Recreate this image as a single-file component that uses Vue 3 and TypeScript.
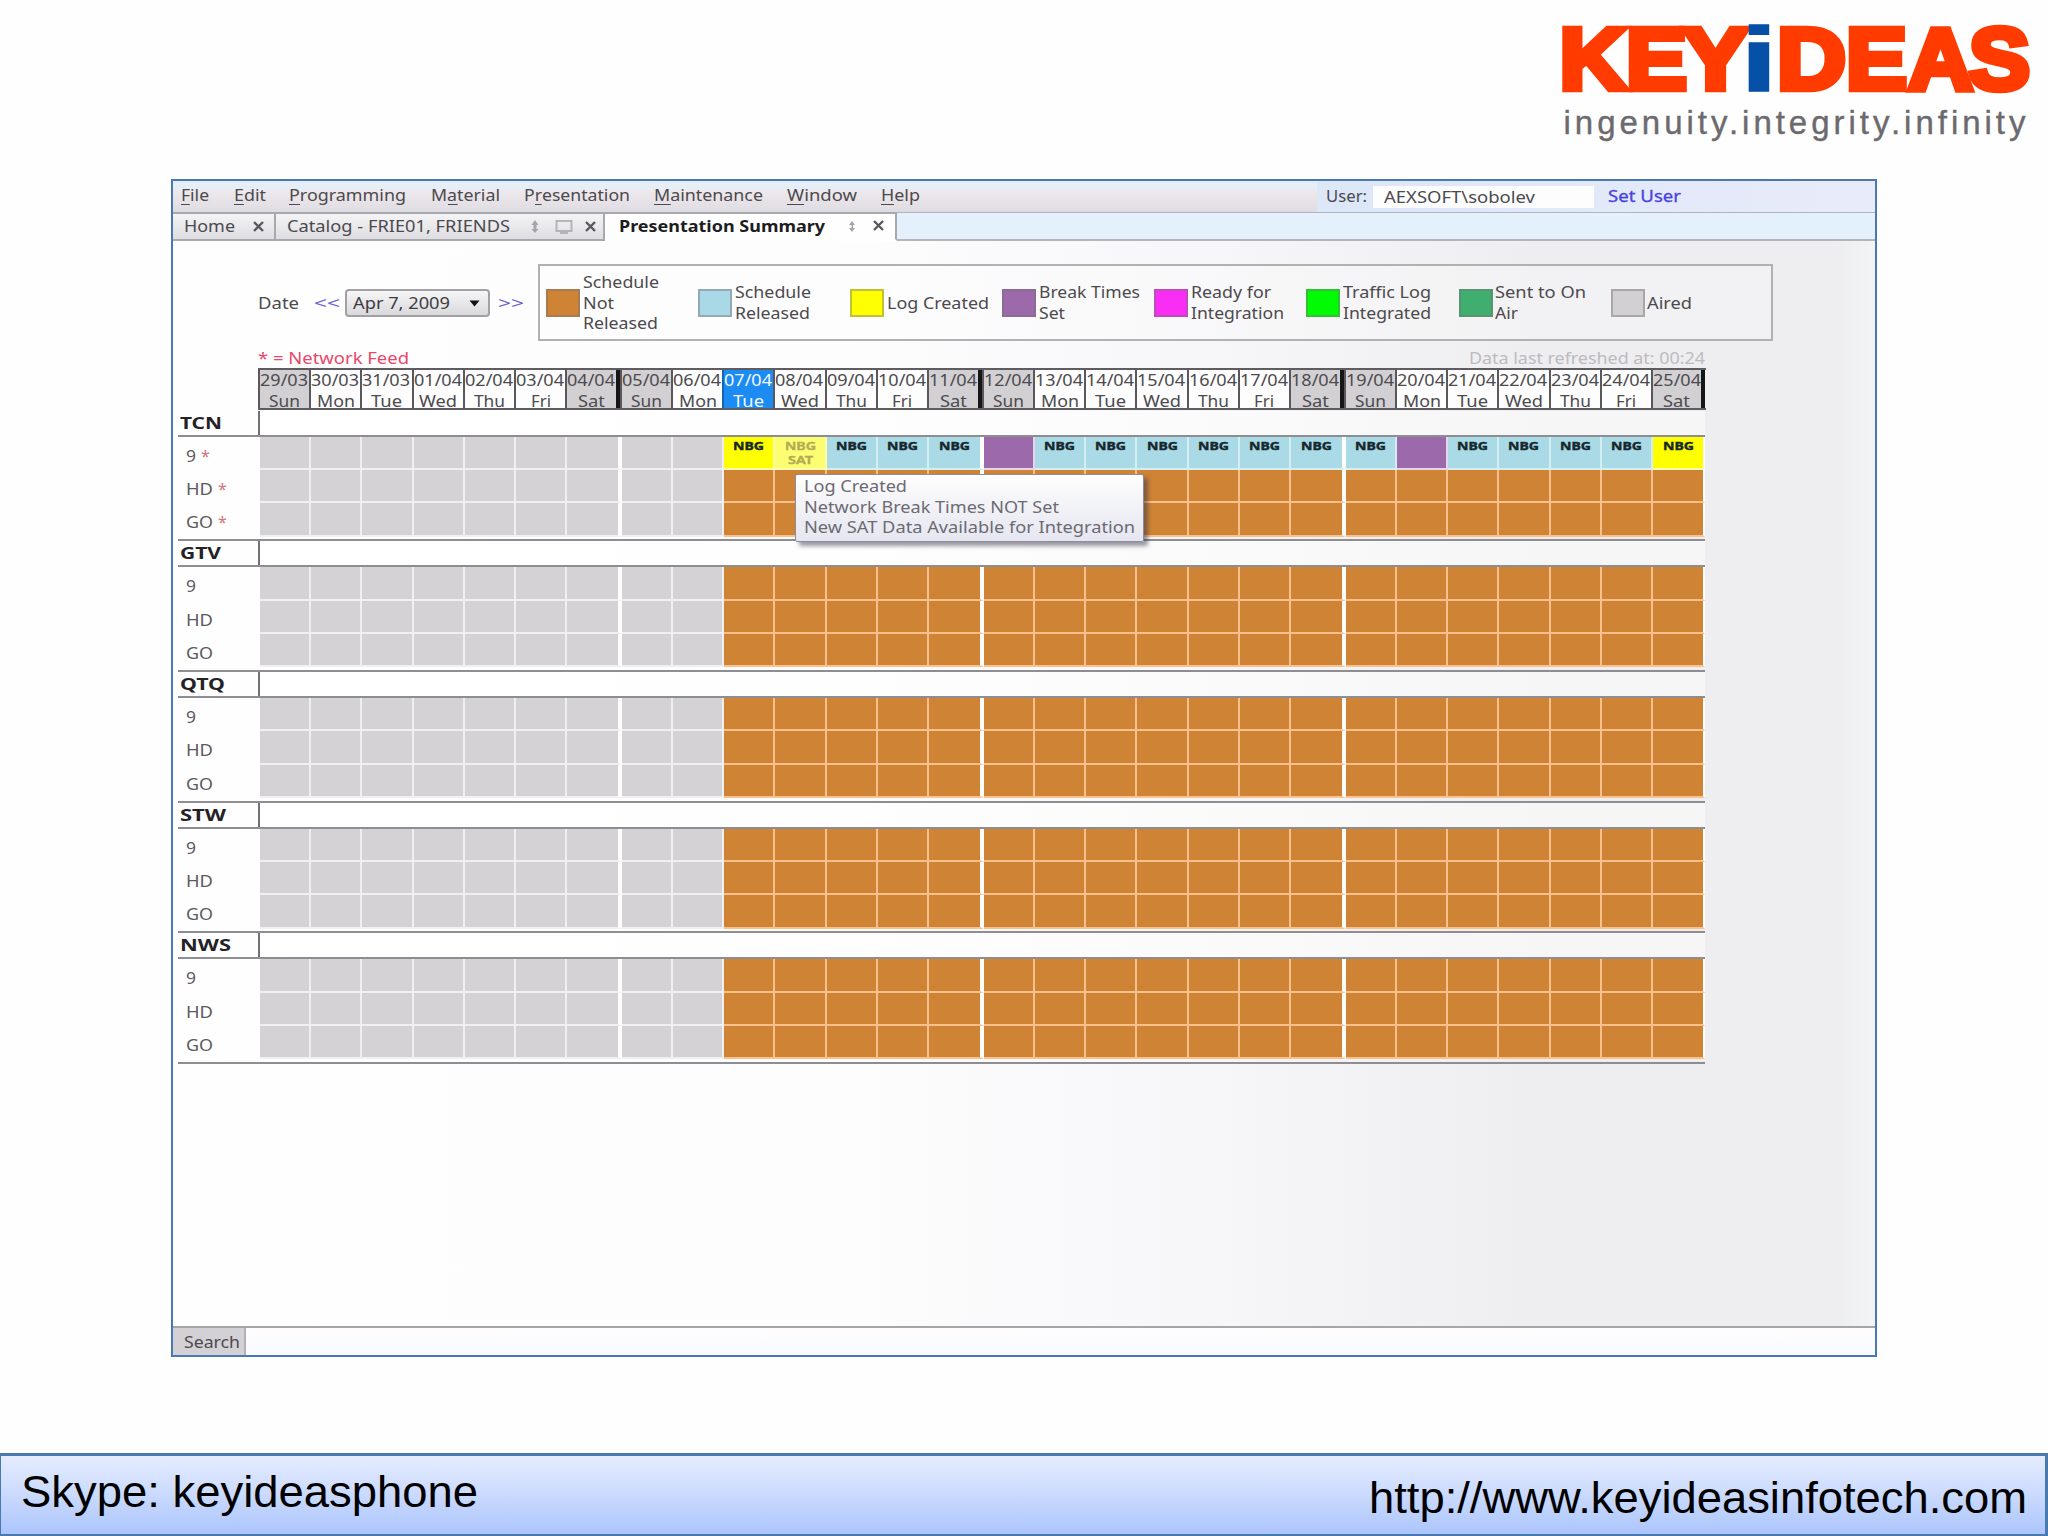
<script setup lang="ts">
import type { Directive } from 'vue'

/* Stretches a label horizontally so that it occupies the given width. */
const vFit: Directive<HTMLElement, number> = {
  mounted(el, { value }) {
    const natural = el.getBoundingClientRect().width
    if (natural > 0) {
      el.style.transform = `scaleX(${value / natural})`
      el.style.marginRight = `${value - natural}px`
    }
  },
}

interface MenuItem { pre: string; key: string; post: string; width: number; advance: number }
const menu: MenuItem[] = [
  { pre: '', key: 'F', post: 'ile', width: 28, advance: 53 },
  { pre: '', key: 'E', post: 'dit', width: 32, advance: 55 },
  { pre: '', key: 'P', post: 'rogramming', width: 117, advance: 142 },
  { pre: 'M', key: 'a', post: 'terial', width: 69, advance: 93 },
  { pre: 'P', key: 'r', post: 'esentation', width: 106, advance: 130 },
  { pre: '', key: 'M', post: 'aintenance', width: 109, advance: 133 },
  { pre: '', key: 'W', post: 'indow', width: 70, advance: 94 },
  { pre: '', key: 'H', post: 'elp', width: 39, advance: 60 },
]

interface Line { text: string; width: number }
const legend: { color: string; lines: Line[] }[] = [
  { color: '#cf8435', lines: [{ text: 'Schedule', width: 76 }, { text: 'Not', width: 31 }, { text: 'Released', width: 75 }] },
  { color: '#a9d8e6', lines: [{ text: 'Schedule', width: 76 }, { text: 'Released', width: 75 }] },
  { color: '#ffff00', lines: [{ text: 'Log Created', width: 102 }] },
  { color: '#9c69ab', lines: [{ text: 'Break Times', width: 101 }, { text: 'Set', width: 26 }] },
  { color: '#f92df4', lines: [{ text: 'Ready for', width: 80 }, { text: 'Integration', width: 93 }] },
  { color: '#00fb04', lines: [{ text: 'Traffic Log', width: 88 }, { text: 'Integrated', width: 88 }] },
  { color: '#3fae6e', lines: [{ text: 'Sent to On', width: 91 }, { text: 'Air', width: 23 }] },
  { color: '#d2d0d3', lines: [{ text: 'Aired', width: 45 }] },
]

const names = ['Sun', 'Mon', 'Tue', 'Wed', 'Thu', 'Fri', 'Sat']
const nameWidths = [31, 38, 31, 38, 31, 20, 27]
const TODAY = 9
const days = Array.from({ length: 28 }, (_, i) => {
  const d = new Date(Date.UTC(2009, 2, 29 + i))
  const two = (n: number) => String(n).padStart(2, '0')
  return {
    index: i,
    date: `${two(d.getUTCDate())}/${two(d.getUTCMonth() + 1)}`,
    name: names[i % 7],
    width: nameWidths[i % 7],
    weekend: i % 7 === 0 || i % 7 === 6,
    endOfWeek: i % 7 === 6,
  }
})

const groups = ['TCN', 'GTV', 'QTQ', 'STW', 'NWS']
const groupWidths = [42, 41, 45, 46, 51]
const rows = [{ name: '9', width: 10 }, { name: 'HD', width: 27 }, { name: 'GO', width: 27 }]

function status(group: number, row: number, day: number): string {
  if (day < TODAY) return 'aired'
  if (group > 0 || row > 0) return 'pending'
  if (day === TODAY || day === 27) return 'log'
  if (day === 10) return 'log-sat'
  if (day === 14 || day === 22) return 'breaks'
  return 'released'
}
const marked = (s: string) => s === 'log' || s === 'log-sat' || s === 'released'

const tip: Line[] = [
  { text: 'Log Created', width: 103 },
  { text: 'Network Break Times NOT Set', width: 255 },
  { text: 'New SAT Data Available for Integration', width: 331 },
]
</script>

<template>
  <div class="slide">
    <header class="brand">
      <svg width="508" height="160" viewBox="0 0 508 160" aria-label="KEYiDEAS">
        <g class="mark">
          <text y="88.5" x="19.500" textLength="67" lengthAdjust="spacingAndGlyphs">K</text>
          <text y="88.5" x="86" textLength="61" lengthAdjust="spacingAndGlyphs">E</text>
          <text y="88.5" x="143" textLength="65" lengthAdjust="spacingAndGlyphs">Y</text>
          <text y="88.5" x="237" textLength="69" lengthAdjust="spacingAndGlyphs">D</text>
          <text y="88.5" x="306" textLength="61" lengthAdjust="spacingAndGlyphs">E</text>
          <text y="88.5" x="368" textLength="65" lengthAdjust="spacingAndGlyphs">A</text>
          <text y="88.5" x="429" textLength="61" lengthAdjust="spacingAndGlyphs">S</text>
        </g>
        <text class="mark-i" y="91" x="200.500" textLength="37" lengthAdjust="spacingAndGlyphs">i</text>
        <text class="tagline" y="134" x="23.500" textLength="462">ingenuity.integrity.infinity</text>
      </svg>
    </header>

    <main class="window">
      <div class="menubar">
        <nav class="menu">
          <span v-for="m in menu" :key="m.key + m.post" class="menu-item" :style="{ width: m.advance + 'px' }">
            <span v-fit="m.width" class="t">{{ m.pre }}<u>{{ m.key }}</u>{{ m.post }}</span>
          </span>
        </nav>
        <div class="user">
          <span v-fit="41" class="t">User:</span>
          <span class="user-field"><span v-fit="151" class="t">AEXSOFT\sobolev</span></span>
          <span v-fit="73" class="t link">Set User</span>
        </div>
      </div>

      <div class="tabs">
        <div class="tab home">
          <span v-fit="51" class="t">Home</span>
          <svg class="close" width="13" height="11" viewBox="0 0 13 11"><path d="M2 1l9 9M11 1l-9 9" /></svg>
        </div>
        <div class="tab catalog">
          <span v-fit="223" class="t">Catalog - FRIE01, FRIENDS</span>
          <svg class="pin" width="8" height="13" viewBox="0 0 8 13"><path d="M4 0L0.500 5h2v4h-2L4 13l3.500-4h-2V5h2z" /></svg>
          <svg class="disk" width="18" height="14" viewBox="0 0 18 14"><path d="M1.500 1h15v10h-15zM5 13h8" /></svg>
          <svg class="close" width="13" height="11" viewBox="0 0 13 11"><path d="M2 1l9 9M11 1l-9 9" /></svg>
        </div>
        <div class="tab active">
          <span v-fit="206" class="t">Presentation Summary</span>
          <svg class="pin" width="8" height="13" viewBox="0 0 8 13"><path d="M4 1L1 5h2.500v3H1l3 4 3-4H5V5h2z" /></svg>
          <svg class="close" width="13" height="11" viewBox="0 0 13 11"><path d="M2 1l9 9M11 1l-9 9" /></svg>
        </div>
        <div class="tab-rest"></div>
      </div>

      <section class="content">
        <div class="controls">
          <div class="date">
            <span v-fit="41" class="t">Date</span>
            <span v-fit="26" class="t step prev">&lt;&lt;</span>
            <span class="select">
              <span v-fit="97" class="t">Apr 7, 2009</span>
              <svg width="11" height="7" viewBox="0 0 11 7"><path d="M0.500 0.500h10L5.500 6.500z" fill="#111" /></svg>
            </span>
            <span v-fit="26" class="t step next">&gt;&gt;</span>
          </div>
          <div class="legend">
            <div v-for="(l, i) in legend" :key="i" class="legend-item">
              <i class="swatch" :style="{ background: l.color }"></i>
              <span class="legend-text">
                <span v-for="line in l.lines" :key="line.text" class="line"><span v-fit="line.width" class="t">{{ line.text }}</span></span>
              </span>
            </div>
          </div>
        </div>

        <div class="notes">
          <span v-fit="151" class="t feed">* = Network Feed</span>
          <span class="refreshed"><span v-fit="236" class="t">Data last refreshed at: 00:24</span></span>
        </div>

        <div class="grid">
          <div class="days">
            <div v-for="d in days" :key="d.index" class="day"
                 :class="{ weekend: d.weekend, end: d.endOfWeek, today: d.index === TODAY }">
              <span class="line"><span v-fit="48" class="t">{{ d.date }}</span></span>
              <span class="line mid"><span v-fit="d.width" class="t">{{ d.name }}</span></span>
            </div>
          </div>

          <div v-for="(g, gi) in groups" :key="g" class="group" :class="{ first: gi === 0 }">
            <div class="group-head">
              <div class="group-name"><span v-fit="groupWidths[gi]" class="t">{{ g }}</span></div>
              <div class="group-band"></div>
            </div>
            <div v-for="(r, ri) in rows" :key="r.name" class="row">
              <div class="row-name">
                <span v-fit="r.width" class="t">{{ r.name }}</span>
                <span v-if="gi === 0" class="t star">*</span>
              </div>
              <div v-for="d in days" :key="d.index" class="cell" :class="[status(gi, ri, d.index), { end: d.endOfWeek }]">
                <template v-if="marked(status(gi, ri, d.index))">
                  <b><span v-fit="31" class="t">NBG</span></b>
                  <b v-if="status(gi, ri, d.index) === 'log-sat'"><span v-fit="25" class="t sat">SAT</span></b>
                </template>
              </div>
            </div>
          </div>
        </div>

        <div class="tooltip">
          <span v-for="l in tip" :key="l.text" class="line"><span v-fit="l.width" class="t">{{ l.text }}</span></span>
        </div>
      </section>

      <div class="statusbar">
        <div class="search"><span v-fit="56" class="t">Search</span></div>
      </div>
    </main>

    <footer class="contact">
      <span v-fit="457" class="t skype">Skype: keyideasphone</span>
      <span class="site"><span v-fit="658" class="t">http://www.keyideasinfotech.com</span></span>
    </footer>
  </div>
</template>

<style>
body { background: #fefefe; }
</style>

<style scoped>
* { box-sizing: border-box; }
.slide {
  width: 2048px; height: 1536px; overflow: hidden; position: relative;
  display: flex; flex-direction: column; background: #fefefe;
  font-family: "Noto Sans", "Open Sans", sans-serif; font-size: 16px; color: #4c4a4e;
}
.t { display: inline-block; white-space: pre; transform-origin: 0 50%; flex: none; }
.line { display: block; white-space: nowrap; }

.brand { height: 179px; display: flex; justify-content: flex-end; flex: none; }
.mark text, .mark-i { font: bold 88px "Liberation Sans", Arial, sans-serif; }
.mark text { fill: #ff3b00; stroke: #ff3b00; stroke-width: 6.500px; }
.mark-i { font-size: 90px; fill: #0750a8; stroke: #0750a8; stroke-width: 1.500px; }
.tagline { font: 33px "Liberation Sans", Arial, sans-serif; fill: #6c6a6e; stroke: #6c6a6e; stroke-width: .4px; }

.window {
  width: 1706px; height: 1178px; margin-left: 171px; flex: none;
  border: 2px solid #4a79b2; display: flex; flex-direction: column;
}
.menubar {
  height: 31px; flex: none; display: flex; line-height: 28px;
  background: linear-gradient(90deg, #dfe7f3, #dce7f8 70%, #e8ebfa);
}
.menu {
  width: 1144px; padding-left: 8px; display: flex;
  background: linear-gradient(#e3effc 0, #e9edf4 24%, #ebe6e9 45%, #e2dfe5 85%, #dcdce2);
}
.menu-item { flex: none; }
u { text-decoration: none; box-shadow: inset 0 -1px #4c4a4e; display: inline-block; line-height: 19px; }
.user { display: flex; padding: 0 0 0 9px; line-height: 31px; }
.user-field { width: 221px; height: 22px; margin: 5px 14px 0 6px; padding-left: 11px; line-height: 22px; background: #fdfdfe; }
.link { color: #4a43e0; -webkit-text-stroke: .3px #4a43e0; }

.tabs { height: 29px; flex: none; display: flex; background: #e4f0fc; line-height: 27px; }
.tab { display: flex; align-items: center; border: 2px solid #a9a9ad; border-left: 0; background: linear-gradient(#f4f4f6, #dedde1); }
.home { width: 103px; padding-left: 11px; }
.home .close { margin-left: 17px; }
.catalog { width: 329px; padding-left: 11px; }
.catalog .pin { margin-left: 21px; }
.catalog .disk { margin-left: 16px; }
.catalog .close { margin-left: 11px; }
.active { width: 292px; padding-left: 14px; background: #fefefe; border-bottom-color: #fefefe; font-weight: bold; color: #1d1c1f; line-height: 24px; }
.active .t { margin-top: -2px; }
.active .pin { margin-left: 23px; }
.active .close { margin-left: 16px; margin-top: -2px; }
.tab-rest { flex: 1; border: solid #b3b5ba; border-width: 1px 0 2px; }
.close { fill: none; stroke: #5a585c; stroke-width: 2.4; }
.pin { fill: #a3a5ab; }
.disk { fill: none; stroke: #b4b4ba; stroke-width: 2; }

.content {
  height: 1085px; flex: none; position: relative; display: flex; flex-direction: column;
  background: linear-gradient(90deg, #fefefe 0, #fefdfe 38%, #f7f6f8 60%, #eeedef 80%, #eeedef 97.500%, #f2f5f5);
}
.controls { display: flex; padding: 23px 0 0 85px; height: 101px; flex: none; }
.date { width: 280px; height: 77px; padding-top: 1px; display: flex; align-items: center; flex: none; }
.step { color: #6a62d8; }
.prev { margin-left: 15px; }
.select {
  width: 145px; height: 28px; margin: 0 8px 0 5px; padding: 0 8px 0 6px;
  display: flex; align-items: center; justify-content: space-between;
  border: 2px solid #a2a0a4; border-radius: 4px; background: linear-gradient(#f6f6f7, #d9d8db); color: #3d3b3f;
}
.legend { width: 1235px; height: 77px; border: 2px solid #b2b0b3; display: flex; padding-left: 6px; background: rgba(255,255,255,.25); }
.legend-item { width: 152.100px; display: flex; align-items: center; flex: none; }
.swatch { width: 34px; height: 28px; border: 2px solid rgba(120,115,120,.45); flex: none; }
.legend-text { margin-left: 2.500px; line-height: 20.600px; padding-top: 1px; }

.notes { display: flex; height: 23px; width: 1532px; padding: 4px 0 0 85px; line-height: 24px; overflow: hidden; flex: none; }
.feed { color: #e8486a; }
.refreshed { margin-left: auto; color: #bdbbbf; }

.grid { width: 1533px; padding-left: 5px; margin-top: 3px; flex: none; }
.days { display: flex; height: 42px; width: 1448px; margin-left: 80px; border: solid #5e5c60; border-width: 2px 0; }
.day { width: 51.200px; flex: none; border-left: 2px solid #5a585c; overflow: hidden; line-height: 20.500px; font-size: 17px; background: #fdfdfd; height: 38px; color: #4c4a4e; }
.day .line { height: 20.500px; }
.day .mid { text-align: center; }
.day.end { width: 54.800px; border-right: 4px solid #161616; }
.day.end:last-child { width: 53.800px; }
.weekend { background: #d2d0d3; }
.today { background: #1c8cf2; color: #f2f8ff; border-color: #1565b5; }

.group { border-top: 2px solid #8e8d91; height: 130.700px; width: 1527px; }
.group:last-child { border-bottom: 2px solid #8e8d91; height: 132.700px; }
.group.first { border-top-color: transparent; margin-top: -1.500px; }
.group-head { display: flex; height: 26px; border-bottom: 2px solid #8e8d91; }
.group-name { width: 82px; padding-left: 2px; border-right: 2px solid #727074; font-weight: bold; color: #242226; line-height: 25px; }
.group-band { flex: 1; background: rgba(255,255,255,.5); }
.row { display: flex; height: 33.400px; }
.row-name { width: 82px; padding-left: 8px; line-height: 38px; flex: none; color: #5c5a5e; }
.star { color: #cf7480; margin-left: 5px; }
.cell { width: 51.200px; height: 33.400px; flex: none; border: solid #f0eff1; border-width: 0 2px 2px 0; overflow: hidden; text-align: center; }
.cell.end { width: 54.800px; border-right: 4px solid #fefdfc; }
.cell.end:last-child { width: 52.500px; border-right-width: 2px; }
.cell b { display: block; height: 15px; line-height: 14px; font-size: 11px; color: #16282c; margin-bottom: 1px; -webkit-text-stroke: .4px; }
.cell b:first-child { padding-top: 2px; }
.aired { background: #d4d2d5; }
.pending { background: #cf8435; border-color: #fcc08c; }
.released { background: #a9dae6; border-color: #d4eef4; }
.breaks { background: #9c69ab; border-color: #e6d6ea; }
.log { background: #ffff00; border-color: #fdfdb0; }
.log-sat { background: #fdfd72; border-color: #fdfdb0; }
.cell.log-sat b { color: #b3aa55; font-weight: 600; }

.tooltip {
  position: absolute; left: 622px; top: 233px; width: 349px; height: 68px; padding: 1px 0 0 8px;
  line-height: 20.600px; border: 1px solid #8d8c98; border-radius: 2px; color: #6c6a72;
  background: linear-gradient(#fefefe, #e5e6f0); box-shadow: 4px 4px 4px rgba(50,50,70,.5);
}

.statusbar { flex: 1; border-top: 2px solid #a6a5a8; background: linear-gradient(#fefcfd, #f8fbff); }
.search { width: 73px; height: 27px; padding-left: 11px; line-height: 28px; background: #d3d1d5; border-right: 2px solid #b2b0b5; }

.contact {
  position: relative; flex: none; height: 83px; margin-top: 96px; display: flex; justify-content: space-between;
  border: 3px solid #4a79b0; border-left-width: 1px; border-bottom-width: 2px;
  background: linear-gradient(#e5ecfe, #cddcfe 45%, #abc5fb); color: #000;
  font-family: "Liberation Sans", Arial, sans-serif; font-size: 44px; line-height: 50px;
}
.skype { margin: 11px 0 0 20px; }
.site { margin: 17px 18px 0 0; }
</style>
